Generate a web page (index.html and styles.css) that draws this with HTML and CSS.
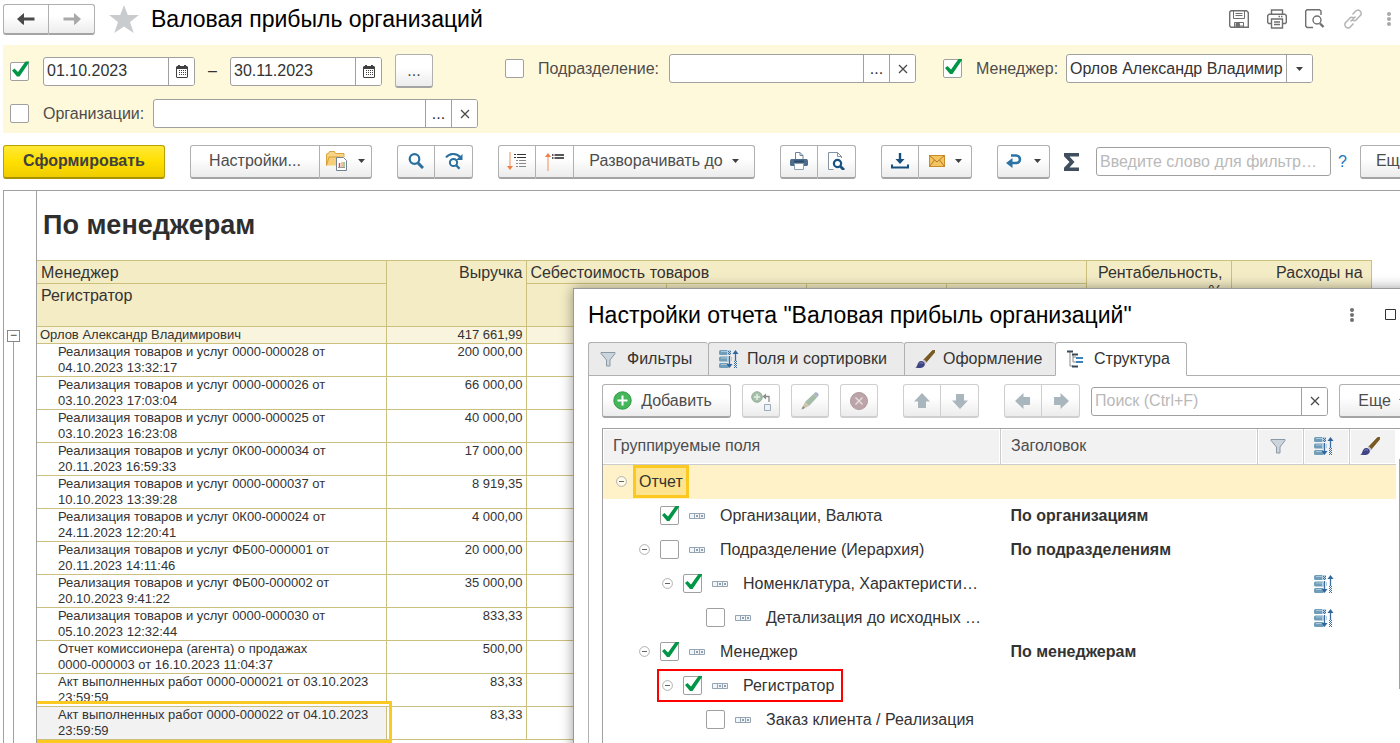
FILE: index.html
```html
<!DOCTYPE html>
<html lang="ru">
<head>
<meta charset="utf-8">
<title>Валовая прибыль организаций</title>
<link rel="stylesheet" href="styles.css">
</head>
<body>
<svg class="sprite" aria-hidden="true">
  <symbol id="i-cal" viewBox="0 0 12 13"><path fill="#404040" fill-rule="evenodd" d="M1 1h1V0h2v1h4V0h2v1h1l1 1v10l-1 1H1l-1-1V2zM1 4v8h10V4z"/><path fill="#404040" d="M5 5h1v1H5zM7 5h1v1H7zM9 5h1v1H9zM3 7h1v1H3zM5 7h1v1H5zM7 7h1v1H7zM9 7h1v1H9zM3 9h1v1H3zM5 9h1v1H5zM7 9h1v1H7zM3 5h1v1H3zM9 9h1v1H9z"/></symbol>
  <symbol id="i-x" viewBox="0 0 10 10"><path d="M1 1l8 8M9 1l-8 8" stroke="#4a4a4a" stroke-width="1.3"/></symbol>
  <symbol id="i-down" viewBox="0 0 7 4"><path d="M0 0h7L3.500 4z" fill="#404040"/></symbol>
  <symbol id="i-funnel" viewBox="0 0 16 16"><path d="M1 1.500h14v1l-5 6.500V15H6.500V9L1 2.500z" fill="#ccd5dc" stroke="#8b98a5"/></symbol>
  <symbol id="i-sort" viewBox="0 0 20 18"><g fill="#6f9dba"><rect width="10" height="5" rx="1.500"/><rect y="6.500" width="10" height="5" rx="1.500"/><rect y="13" width="10" height="5" rx="1.500"/></g><path d="M2 1.500h7M2 8h7M2 14.500h7" stroke="#a9c7d9"/><path d="M8 0h4v5H8zM8 7h2v4H8zM12 7h1v4h-1z" fill="#b6cede"/><path d="M9 1h1v1H9zM11 1h1v1h-1zM10 2h1v1h-1zM9 3h1v1H9zM11 3h1v1h-1zM10 4h1v1h-1zM15 11h1v1h-1zM17 11h1v1h-1zM16 12h1v1h-1zM15 13h1v1h-1zM17 13h1v1h-1zM16 14h1v1h-1zM15 15h1v1h-1zM17 15h1v1h-1zM16 16h1v1h-1zM15 17h1v1h-1zM17 17h1v1h-1z" fill="#3d6f9e"/><path d="M10.500 6v10M16.500 3v8" stroke="#3a6ea5" stroke-width="1.300"/><path d="M7.500 14h6l-3 4zM13.500 4l3-4 3 4z" fill="#2f669c"/></symbol>
  <symbol id="i-brush" viewBox="0 0 20 18"><path d="M8.500 10L17.500.5 20 0l-.5 2.500L11 12.500z" fill="#7a5a1e" stroke="#5c4213" stroke-width=".6"/><path d="M7.500 10.500l1.500-1 2.500 2.500-1 2z" fill="#c3c7cf"/><path d="M0 17.500c2.500-.5 2-3 3.500-5 1.500-1.800 4-2 5.500-.3s1 4.300-1.500 5.300-5 .5-7.500 0z" fill="#3f4484"/><path d="M4.500 13.500c1-1 2.500-1 3.500 0" stroke="#8488bd" fill="none"/></symbol>
  <symbol id="i-field" viewBox="0 0 16 6"><path d="M.5.5h15v5H.5zM5.500.5v5M10.500.5v5" fill="#f2f5f7" stroke="#95a5b3"/><path d="M7 2h2v2H7zM12 2h2v2h-2z" fill="#8da0af"/></symbol>
  <symbol id="i-minus" viewBox="0 0 11 11"><circle cx="5.500" cy="5.500" r="4.900" fill="#fff" fill-opacity=".6" stroke="#b0b0b0"/><path d="M3 5.500h5" stroke="#666"/></symbol>
  <symbol id="i-arrow" viewBox="0 0 18 16"><path d="M9 0l8 8.500h-4V15H5V8.500H1z" fill="#aab6be"/></symbol>
</svg>

<main class="app">
  <header class="titlebar">
    <div class="group">
      <button class="btn btn--nav" aria-label="Назад"><svg width="18" height="12" viewBox="0 0 18 12"><path d="M0 6l7-6v4.500h10.500v3H7V12l-2-1.200z" fill="#4a4a4a"/></svg></button>
      <button class="btn btn--nav" aria-label="Вперед"><svg width="18" height="12" viewBox="0 0 18 12"><path d="M18 6l-7-6v4.500H.5v3H11V12l2-1.200z" fill="#a9a9a9"/></svg></button>
    </div>
    <svg class="star" width="30" height="28" viewBox="0 0 30 28"><path d="M15 0l3.800 10H30l-9 7 3.700 11L15 21.500 5.300 28 9 17l-9-7h11.200z" fill="#c9ccce"/></svg>
    <h1 class="heading">Валовая прибыль организаций</h1>
    <div class="title-tools">
      <svg width="20" height="18" viewBox="0 0 20 18" fill="none" stroke="#6f6f6f"><path d="M2 .7h15.500l1.800 1.800V17.300H2L.7 16V2z" stroke-width="1.400"/><path d="M4.500 1v7.500h11V1M6.500 3.500h7M6.500 5.500h7"/><path d="M5.500 17v-4.500h9V17"/><path d="M7 13.500h3.500V17H7zM10.500 16h4" fill="#6f6f6f"/></svg>
      <svg width="20" height="20" viewBox="0 0 20 20" fill="none" stroke="#6f6f6f" stroke-width="1.400"><path d="M4.500 5V1h11v4M4.500 14.500H1.700L.7 13.500V6.500l1.500-1.300h15.600l1.500 1.300v7l-1 1h-2.800"/><path d="M4.500 10h11v9h-11z"/><path d="M7 13h6M7 15.500h6M11.500 7.500h1.500M14 7.500h1.500"/></svg>
      <svg width="20" height="20" viewBox="0 0 20 20" fill="none" stroke="#6f6f6f" stroke-width="1.400"><path d="M8 18.500H2L.7 17V2L2 .7h12.500L16 2v4"/><circle cx="12" cy="11" r="4"/><path d="M15 14.500l3.500 3.500" stroke-width="2.400"/></svg>
      <svg width="20" height="20" viewBox="0 0 20 20" fill="none" stroke="#b4b4b4" stroke-width="1.500"><path d="M9.500 5.500l3-3.200c1.300-1.400 3.300-1.500 4.600-.3s1.500 3.300.2 4.600l-3.800 4c-1.200 1.200-2.800 1.300-4.100.5M10.500 14.500l-3 3.200c-1.300 1.400-3.300 1.500-4.600.3s-1.500-3.300-.2-4.600l3.800-4c1.200-1.200 2.800-1.300 4.100-.5M7.500 12.500l5-5"/></svg>
      <svg width="4" height="14" viewBox="0 0 4 14" fill="#a8a8a8"><circle cx="2" cy="2" r="2"/><circle cx="2" cy="7" r="2"/><circle cx="2" cy="12" r="2"/></svg>
    </div>
  </header>

  <section class="filters">
    <div class="filter-main">
      <div class="filter-row filter-row--tall">
        <input class="check" type="checkbox" checked aria-label="Период">
        <div class="field field--date"><input type="text" value="01.10.2023" aria-label="Начало периода"><button aria-label="Календарь"><svg width="12" height="13"><use href="#i-cal"/></svg></button></div>
        <span class="dash">–</span>
        <div class="field field--date"><input type="text" value="30.11.2023" aria-label="Конец периода"><button aria-label="Календарь"><svg width="12" height="13"><use href="#i-cal"/></svg></button></div>
        <button class="btn btn--dots">...</button>
      </div>
      <div class="filter-row">
        <input class="check" type="checkbox" id="c-org"><label class="lbl lbl--org" for="c-org">Организации:</label>
        <div class="field field--org"><input type="text" aria-label="Организации"><button class="dots">...</button><button aria-label="Очистить"><svg width="10" height="10"><use href="#i-x"/></svg></button></div>
      </div>
    </div>
    <div class="filter-row filter-row--side">
      <input class="check" type="checkbox" id="c-dep"><label class="lbl lbl--dep" for="c-dep">Подразделение:</label>
      <div class="field field--ref"><input type="text" aria-label="Подразделение"><button class="dots">...</button><button aria-label="Очистить"><svg width="10" height="10"><use href="#i-x"/></svg></button></div>
    </div>
    <div class="filter-row filter-row--side">
      <input class="check" type="checkbox" id="c-man" checked><label class="lbl lbl--man" for="c-man">Менеджер:</label>
      <div class="field field--ref"><input type="text" value="Орлов Александр Владимирович" aria-label="Менеджер"><button aria-label="Выбрать"><svg width="7" height="4"><use href="#i-down"/></svg></button></div>
    </div>
  </section>

  <div class="toolbar">
    <button class="btn btn--primary">Сформировать</button>
    <div class="group">
      <button class="btn btn--settings">Настройки...</button>
      <button class="btn btn--menu btn--variants" aria-label="Варианты отчета"><svg width="22" height="20" viewBox="0 0 22 20"><path d="M.5 14.500V3l2-.5 1-2h5l1 2H18V6" fill="#f8d486" stroke="#d9a23c"/><path d="M1 5h17v9.500H1z" fill="#f6cf78"/><path d="M.5 14.500L3 6h11" fill="none" stroke="#d9a23c"/><path d="M10.500 6.500h7l3 3v10h-10z" fill="#fff" stroke="#718391"/><path d="M13.500 16v-4" stroke="#e04a3c" stroke-width="1.500"/><path d="M16 16v-5" stroke="#d98c2a"/><path d="M18 16v-5" stroke="#4aa14a"/><path d="M12 16.500h7" stroke="#999"/></svg><svg width="7" height="4"><use href="#i-down"/></svg></button>
    </div>
    <div class="group">
      <button class="btn btn--ico" aria-label="Найти"><svg width="16" height="16" viewBox="0 0 16 16"><circle cx="6.500" cy="6" r="4.800" fill="none" stroke="#2a6f9e" stroke-width="2.200"/><path d="M10 10l5 5" stroke="#2a6f9e" stroke-width="3"/></svg></button>
      <button class="btn btn--ico" aria-label="Найти следующий"><svg width="18" height="17" viewBox="0 0 18 17" fill="none" stroke="#2a6f9e"><path d="M1 4.500C4 .5 11-.5 15 4" stroke-width="2"/><path d="M17.500 1v6H11z" fill="#2a6f9e" stroke="none"/><circle cx="8.500" cy="9.500" r="3.600" stroke-width="2"/><path d="M11 12l3.500 3.800" stroke-width="2.400"/></svg></button>
    </div>
    <div class="group">
      <button class="btn btn--ico" aria-label="Развернуть"><svg width="20" height="19" viewBox="0 0 20 19"><path d="M3 0v15" stroke="#f58d57"/><path d="M0 14h6l-3 4z" fill="#f47c40"/><path d="M7 2.500h2M10 2.500h9M7 5.500h2M10 5.500h9" stroke="#333"/><path d="M9 8.500h2M12 8.500h7M9 11.500h2M12 11.500h7M9 14.500h2M12 14.500h7" stroke="#888"/></svg></button>
      <button class="btn btn--ico" aria-label="Свернуть"><svg width="20" height="19" viewBox="0 0 20 19"><path d="M3 3v16" stroke="#f58d57"/><path d="M0 5h6L3 1z" fill="#f47c40"/><path d="M7 3h1.500M9.500 3H19M7 6h1.500M9.500 6H19" stroke="#222" stroke-width="1.300"/></svg></button>
      <button class="btn btn--expand">Разворачивать до <svg width="7" height="4"><use href="#i-down"/></svg></button>
    </div>
    <div class="group">
      <button class="btn btn--ico" aria-label="Печать"><svg width="18" height="18" viewBox="0 0 18 18"><path d="M5.500 8V.5H10l3 3V8z" fill="#fff" stroke="#71859a"/><path d="M10 .5v3h3" fill="none" stroke="#71859a"/><path d="M1 7h16l1 1.500V13l-1 1H1l-1-1V8.500z" fill="#4e6d8d"/><path d="M4 8.500h10v2H4z" fill="#294a6a"/><path d="M4.500 11.500h9v6h-9z" fill="#fff" stroke="#8aa0b4"/></svg></button>
      <button class="btn btn--ico" aria-label="Предпросмотр"><svg width="18" height="18" viewBox="0 0 18 18"><path d="M5.500 17.500H.5V.5h9l4 4V6M9.500.5v4h4" fill="#fff" stroke="#8293a3"/><circle cx="9.500" cy="11.500" r="3.600" fill="#fff" stroke="#175280" stroke-width="2.200"/><path d="M12 14l4 4" stroke="#175280" stroke-width="2.800"/></svg></button>
    </div>
    <div class="group">
      <button class="btn btn--ico" aria-label="Сохранить"><svg width="18" height="16" viewBox="0 0 18 16"><path d="M9 0v8" stroke="#164e7c" stroke-width="2.400"/><path d="M4.500 6h9L9 11z" fill="#164e7c"/><path d="M1 11.500v3h16v-3" fill="none" stroke="#164e7c" stroke-width="2"/></svg></button>
      <button class="btn btn--menu" aria-label="Отправить"><svg width="16" height="12" viewBox="0 0 16 12"><path d="M.5.5h15v11H.5z" fill="#f4c461" stroke="#c98b28"/><path d="M.5.5L8 7l7.500-6.500M.5 11.500L5.500 5M15.500 11.500L10.500 5" fill="none" stroke="#b57a20"/></svg><svg width="7" height="4"><use href="#i-down"/></svg></button>
    </div>
    <button class="btn btn--back" aria-label="История"><svg width="16" height="14" viewBox="0 0 16 14"><path d="M5 1.500h5c5 0 5.500 7.500 0 7.500H6" fill="none" stroke="#2d74a4" stroke-width="2.600"/><path d="M0 9l6.500-5v10z" fill="#2d74a4"/></svg><svg width="7" height="4"><use href="#i-down"/></svg></button>
    <svg class="sigma" width="16" height="18" viewBox="0 0 16 18"><path d="M0 0h15v3.500H5.500L10.500 9l-5 5.500H15V18H0v-3.200L5.500 9 0 3.200z" fill="#3f4f5e"/></svg>
    <div class="field field--search"><input type="text" placeholder="Введите слово для фильтр…" aria-label="Фильтр"></div>
    <a class="help" href="#">?</a>
    <button class="btn btn--more">Еще</button>
  </div>

  <section class="report">
    <div class="gutter"><span class="fold">−</span><span class="fold-line"></span></div>
    <div class="sheet">
      <h2 class="sheet-title">По менеджерам</h2>
      <table class="rt">
        <colgroup><col class="w-first"><col class="w140"><col class="w140"><col class="w140"><col class="w140"><col class="w140"><col class="w145"><col class="w140"></colgroup>
        <thead>
          <tr class="h1r"><th>Менеджер</th><th class="num" rowspan="2">Выручка</th><th colspan="4">Себестоимость товаров</th><th class="num num--wide" rowspan="2">Рентабельность, %</th><th class="num num--wide" rowspan="2">Расходы на</th></tr>
          <tr class="h2r"><th>Регистратор</th><th></th><th></th><th></th><th></th></tr>
        </thead>
        <tbody>
          <tr class="sum"><td>Орлов Александр Владимирович</td><td class="num">417 661,99</td><td></td><td></td><td></td><td></td><td></td><td></td></tr>
          <tr><td>Реализация товаров и услуг 0000-000028 от<br>04.10.2023 13:32:17</td><td class="num">200 000,00</td><td></td><td></td><td></td><td></td><td></td><td></td></tr>
          <tr><td>Реализация товаров и услуг 0000-000026 от<br>03.10.2023 17:03:04</td><td class="num">66 000,00</td><td></td><td></td><td></td><td></td><td></td><td></td></tr>
          <tr><td>Реализация товаров и услуг 0000-000025 от<br>03.10.2023 16:23:08</td><td class="num">40 000,00</td><td></td><td></td><td></td><td></td><td></td><td></td></tr>
          <tr><td>Реализация товаров и услуг 0К00-000034 от<br>20.11.2023 16:59:33</td><td class="num">17 000,00</td><td></td><td></td><td></td><td></td><td></td><td></td></tr>
          <tr><td>Реализация товаров и услуг 0000-000037 от<br>10.10.2023 13:39:28</td><td class="num">8 919,35</td><td></td><td></td><td></td><td></td><td></td><td></td></tr>
          <tr><td>Реализация товаров и услуг 0К00-000024 от<br>24.11.2023 12:20:41</td><td class="num">4 000,00</td><td></td><td></td><td></td><td></td><td></td><td></td></tr>
          <tr><td>Реализация товаров и услуг ФБ00-000001 от<br>20.11.2023 14:11:46</td><td class="num">20 000,00</td><td></td><td></td><td></td><td></td><td></td><td></td></tr>
          <tr><td>Реализация товаров и услуг ФБ00-000002 от<br>20.10.2023 9:41:22</td><td class="num">35 000,00</td><td></td><td></td><td></td><td></td><td></td><td></td></tr>
          <tr><td>Реализация товаров и услуг 0000-000030 от<br>05.10.2023 12:32:44</td><td class="num">833,33</td><td></td><td></td><td></td><td></td><td></td><td></td></tr>
          <tr><td>Отчет комиссионера (агента) о продажах<br>0000-000003 от 16.10.2023 11:04:37</td><td class="num">500,00</td><td></td><td></td><td></td><td></td><td></td><td></td></tr>
          <tr><td>Акт выполненных работ 0000-000021 от 03.10.2023<br>23:59:59</td><td class="num">83,33</td><td></td><td></td><td></td><td></td><td></td><td></td></tr>
          <tr><td class="current">Акт выполненных работ 0000-000022 от 04.10.2023<br>23:59:59</td><td class="num">83,33</td><td></td><td></td><td></td><td></td><td></td><td></td></tr>
        </tbody>
      </table>
    </div>
  </section>
</main>

<section class="dialog" role="dialog" aria-labelledby="dlg-title">
  <header class="dialog-head">
    <h2 class="heading" id="dlg-title">Настройки отчета "Валовая прибыль организаций"</h2>
    <svg class="dlg-dots" width="4" height="14" viewBox="0 0 4 14" fill="#707070"><circle cx="2" cy="2" r="2"/><circle cx="2" cy="7" r="2"/><circle cx="2" cy="12" r="2"/></svg>
    <svg width="11" height="11" viewBox="0 0 11 11"><path d="M.5.5h10v10H.5z" fill="none" stroke="#333"/></svg>
  </header>
  <nav class="tabs">
    <button class="tab tab--filters"><svg width="16" height="16"><use href="#i-funnel"/></svg>Фильтры</button>
    <button class="tab tab--fields"><svg width="20" height="18"><use href="#i-sort"/></svg>Поля и сортировки</button>
    <button class="tab tab--design"><svg width="20" height="18"><use href="#i-brush"/></svg>Оформление</button>
    <button class="tab tab--struct tab--on"><svg width="17" height="18" viewBox="0 0 17 18"><path d="M3 2v14h3M6 4v8h3M6 7h3" fill="none" stroke="#8a8a8a"/><path d="M0 1.500h6M5 4.500h6M5 16.500h6" stroke="#3a4a58" stroke-width="2"/><path d="M9 8h7M9 12h7" stroke="#3b82b8" stroke-width="2"/></svg>Структура</button>
    <span class="tabs-rest"></span>
  </nav>
  <div class="dialog-body">
    <div class="dlg-bar">
      <button class="btn btn--add"><svg width="19" height="19" viewBox="0 0 19 19"><circle cx="9.500" cy="9.500" r="8.700" fill="#45b75a" stroke="#2b9a44"/><path d="M9.500 4.500v10M4.500 9.500h10" stroke="#fff" stroke-width="2"/></svg>Добавить</button>
      <button class="btn btn--sq off" aria-label="Сгруппировать"><svg width="20" height="20" viewBox="0 0 20 20"><circle cx="6" cy="6" r="5.300" fill="#a5bfa9" stroke="#93ae98"/><path d="M6 3v6M3 6h6" stroke="#e6efe7" stroke-width="1.500"/><path d="M18 11V5.500h-4" fill="none" stroke="#8b8b8b" stroke-width="1.300"/><path d="M11.500 5.500L15 2.500v6z" fill="#8b8b8b"/><path d="M13.500 13.500h6v6h-6z" fill="#eef1f4" stroke="#9daabb"/></svg></button>
      <button class="btn btn--sq off" aria-label="Изменить"><svg width="18" height="18" viewBox="0 0 18 18"><path d="M4 10l8.500-8 3.500 3.500L8 14z" fill="#a6bca8"/><path d="M12.500 2L14 .5c2-.7 4 1.300 3.500 3L16 5.500z" fill="#aab4c6"/><path d="M4 10l4 4-7.500 3.500z" fill="#cfc3ac"/><path d="M.5 17.500L2 14l2 2z" fill="#888"/></svg></button>
      <button class="btn btn--sq off" aria-label="Удалить"><svg width="18" height="18" viewBox="0 0 18 18"><circle cx="9" cy="9" r="8.500" fill="#bba5a8" stroke="#b0999c"/><path d="M5.500 5.500l7 7M12.500 5.500l-7 7" stroke="#eadfe0" stroke-width="1.400"/></svg></button>
      <div class="group off group--ud">
        <button class="btn btn--ico" aria-label="Вверх"><svg width="18" height="16"><use href="#i-arrow"/></svg></button>
        <button class="btn btn--ico" aria-label="Вниз"><svg class="r180" width="18" height="16"><use href="#i-arrow"/></svg></button>
      </div>
      <div class="group off group--lr">
        <button class="btn btn--ico" aria-label="Влево"><svg class="r270" width="18" height="16"><use href="#i-arrow"/></svg></button>
        <button class="btn btn--ico" aria-label="Вправо"><svg class="r90" width="18" height="16"><use href="#i-arrow"/></svg></button>
      </div>
      <div class="field field--find"><input type="text" placeholder="Поиск (Ctrl+F)" aria-label="Поиск"><button aria-label="Очистить"><svg width="10" height="10"><use href="#i-x"/></svg></button></div>
      <button class="btn btn--more btn--more-dlg">Еще<svg width="7" height="4"><use href="#i-down"/></svg></button>
    </div>
    <div class="grid-wrap">
      <table class="grid">
        <colgroup><col class="g-name"><col class="g-title"><col class="g-ico"><col class="g-ico"><col class="g-ico"></colgroup>
        <thead><tr><th>Группируемые поля</th><th>Заголовок</th><th class="ic"><svg width="16" height="16"><use href="#i-funnel"/></svg></th><th class="ic"><svg width="20" height="18"><use href="#i-sort"/></svg></th><th class="ic"><svg width="20" height="18"><use href="#i-brush"/></svg></th></tr></thead>
        <tbody>
          <tr class="sel"><td><div class="node"><svg width="11" height="11"><use href="#i-minus"/></svg><span class="cell-on">Отчет</span></div></td><td></td><td></td><td></td><td></td></tr>
          <tr><td><div class="node l1"><span class="gap"></span><input class="check" type="checkbox" id="n1" checked><svg width="16" height="6"><use href="#i-field"/></svg><label for="n1">Организации, Валюта</label></div></td><td class="b">По организациям</td><td></td><td></td><td></td></tr>
          <tr><td><div class="node l1"><svg width="11" height="11"><use href="#i-minus"/></svg><input class="check" type="checkbox" id="n2"><svg width="16" height="6"><use href="#i-field"/></svg><label for="n2">Подразделение (Иерархия)</label></div></td><td class="b">По подразделениям</td><td></td><td></td><td></td></tr>
          <tr><td><div class="node l2"><svg width="11" height="11"><use href="#i-minus"/></svg><input class="check" type="checkbox" id="n3" checked><svg width="16" height="6"><use href="#i-field"/></svg><label for="n3">Номенклатура, Характеристи…</label></div></td><td></td><td></td><td class="ic"><svg width="20" height="18"><use href="#i-sort"/></svg></td><td></td></tr>
          <tr><td><div class="node l3"><span class="gap"></span><input class="check" type="checkbox" id="n4"><svg width="16" height="6"><use href="#i-field"/></svg><label for="n4">Детализация до исходных …</label></div></td><td></td><td></td><td class="ic"><svg width="20" height="18"><use href="#i-sort"/></svg></td><td></td></tr>
          <tr><td><div class="node l1"><svg width="11" height="11"><use href="#i-minus"/></svg><input class="check" type="checkbox" id="n5" checked><svg width="16" height="6"><use href="#i-field"/></svg><label for="n5">Менеджер</label></div></td><td class="b">По менеджерам</td><td></td><td></td><td></td></tr>
          <tr><td><div class="node l2"><div class="marked"><svg width="11" height="11"><use href="#i-minus"/></svg><input class="check" type="checkbox" id="n6" checked><svg width="16" height="6"><use href="#i-field"/></svg><label for="n6">Регистратор</label></div></div></td><td></td><td></td><td></td><td></td></tr>
          <tr><td><div class="node l3"><span class="gap"></span><input class="check" type="checkbox" id="n7"><svg width="16" height="6"><use href="#i-field"/></svg><label for="n7">Заказ клиента / Реализация</label></div></td><td></td><td></td><td></td><td></td></tr>
        </tbody>
      </table>
      <div class="scroll"><span class="thumb"></span></div>
    </div>
  </div>
</section>
</body>
</html>
```
FILE: styles.css
```css
* { box-sizing: border-box; }
html, body { height: 100%; }
body { margin: 0; overflow: hidden; position: relative; background: #fff; color: #333; font: 16px/20px "Liberation Sans", Arial, sans-serif; }
.sprite { position: absolute; width: 0; height: 0; }
svg { flex: none; display: block; }
button, input { font: inherit; color: inherit; margin: 0; }
.app { display: flex; flex-direction: column; height: 100%; padding-left: 3px; }

/* Buttons */
.btn { display: inline-flex; align-items: center; justify-content: center; flex: none; height: 34px; padding: 0; border: 1px solid #b0b0b0; border-bottom: 2px solid #a4a4a4; border-radius: 3px; background: linear-gradient(#fff 40%, #ececec); color: #4d4d4d; white-space: nowrap; }
.group { display: flex; flex: none; }
.group .btn + .btn { border-left: 0; border-top-left-radius: 0; border-bottom-left-radius: 0; }
.group .btn:not(:last-child) { border-top-right-radius: 0; border-bottom-right-radius: 0; }
.btn--ico { width: 38px; }
.btn--menu { width: 53px; gap: 10px; }
.btn--variants { width: 52px; }
.btn--dots { width: 38px; }
.off .btn, .btn.off { border-color: #cfcfcf; }

/* Title bar */
.titlebar { display: flex; align-items: center; height: 45px; flex: none; padding-bottom: 7px; }
.btn--nav { width: 46px; height: 31px; }
.star { margin: 0 12px 0 14px; }
.heading { margin: 0; font-size: 23px; line-height: 28px; font-weight: 400; color: #000; white-space: nowrap; }
.title-tools { display: flex; align-items: center; gap: 18px; margin-left: auto; padding-right: 9px; }
.title-tools svg:last-child { margin-left: 6px; }

/* Filters */
.filters { display: flex; align-items: flex-start; flex: none; height: 88px; padding: 9px 0 0 7px; background: #fff9db; }
.filter-main { display: flex; flex-direction: column; gap: 11px; width: 468px; flex: none; }
.filter-row { display: flex; align-items: center; height: 29px; flex: none; }
.filter-row--tall { height: 34px; }
.filter-row--side { margin-left: 27px; }
.lbl { color: #4d4d4d; white-space: nowrap; flex: none; }
.lbl--org { width: 110px; }
.lbl--dep { width: 131px; }
.lbl--man { width: 90px; }
.filters .check { margin-right: 14px; }
.dash { flex: none; width: 35px; text-align: center; }
.filter-row .btn--dots { margin-left: 13px; }
.check { appearance: none; flex: none; position: relative; width: 19px; height: 19px; margin: 0; border: 1px solid #a0a0a0; border-radius: 2px; background: #fff; }
.check:checked::before { content: ""; position: absolute; inset: -2px; width: 20px; height: 20px; background: #009646; clip-path: path("M3 10L5.500 8 9 11.500 16.500 1 20 1 20 2 10.500 16 8 16z"); }
.field { display: flex; flex: none; height: 29px; border: 1px solid #a0a0a0; border-radius: 3px; background: #fff; overflow: hidden; }
.field input { flex: 1; min-width: 0; border: 0; outline: 0; padding: 0 3px; background: transparent; }
.field input::placeholder { color: #b9b9b9; opacity: 1; }
.field button { display: flex; align-items: center; justify-content: center; width: 26px; flex: none; padding: 0; border: 0; border-left: 1px solid #a0a0a0; background: #fff; }
.field--date { width: 152px; }
.field--org { width: 325px; }
.field--ref { width: 247px; }
.field--search { width: 235px; }
.field--find { width: 237px; }

/* Toolbar */
.toolbar { display: flex; align-items: center; flex: none; gap: 25px; height: 57px; overflow: hidden; }
.btn--primary { width: 162px; border-color: #b8a000; border-bottom-color: #a89200; background: linear-gradient(#ffe838, #ffe000 50%, #efcc00); color: #404040; font-weight: 700; }
.btn--settings { width: 130px; }
.btn--expand { width: 181px; gap: 9px; }
.btn--back { width: 53px; gap: 12px; }
.sigma { margin-left: -11px; }
.field--search { margin-left: -9px; }
.help { margin: 0 -12px 0 -18px; width: 10px; color: #1b75bb; text-decoration: none; }
.btn--more { width: 80px; }
.toolbar .btn--more { justify-content: flex-start; padding-left: 15px; }

/* Report */
.report { display: flex; flex: 1; min-height: 0; overflow: hidden; border-top: 1px solid #a0a0a0; border-left: 1px solid #a0a0a0; }
.gutter { display: flex; flex-direction: column; align-items: center; width: 32px; flex: none; padding: 139px 16px 0 3px; }
.fold { flex: none; width: 13px; height: 12px; border: 1px solid #888; font-size: 12px; line-height: 9px; text-align: center; }
.fold-line { flex: 1; width: 1px; background: #a0a0a0; }
.sheet { flex: 1; min-width: 0; overflow: hidden; border-left: 1px solid #a0a0a0; }
.sheet-title { margin: 0; padding: 18px 6px 19px; font-size: 27px; line-height: 32px; color: #2e2e2e; white-space: nowrap; }
.rt { width: 1334px; border-collapse: collapse; table-layout: fixed; font-size: 13px; line-height: 16px; }
.w-first { width: 349px; }
.w140 { width: 140px; }
.w145 { width: 145px; }
.rt th, .rt td { border: 1px solid #ccc07e; padding: 0 4px; vertical-align: top; text-align: left; }
.rt tr > :first-child { border-left: 0; }
.rt th { background: #f4ecc5; font-size: 16px; line-height: 19px; font-weight: 400; padding-top: 2px; }
.h1r { height: 23px; }
.h2r { height: 43px; }
.rt .num { text-align: right; padding-right: 3px; }
.rt .num--wide { padding-right: 8px; }
.sum { height: 17px; background: #f9f4dd; }
.rt tbody td:first-child { padding-left: 21px; white-space: nowrap; }
.rt tbody .sum td:first-child { padding-left: 3px; }
.rt tbody tr:not(.sum) { height: 33px; }
.rt .current { position: relative; background: #f2f2f2 padding-box; }
.current::after { content: ""; position: absolute; inset: -6px -6px -4px 0; border: 3px solid #fbc91f; border-left: 0; box-shadow: inset 0 2px #fff; }

/* Dialog window over the report */
.dialog { position: absolute; left: 573px; top: 288px; right: -24px; bottom: -24px; display: flex; flex-direction: column; padding-left: 14px; border: 1px solid #999; background: #fff; box-shadow: 0 0 12px rgba(0, 0, 0, .4); overflow: hidden; }
.dialog-head { display: flex; align-items: center; height: 53px; flex: none; padding: 0 27px 2px 0; }
.dlg-dots { margin: 0 31px 0 auto; }
.tabs { display: flex; flex: none; height: 34px; }
.tab { display: flex; align-items: center; gap: 9px; flex: none; padding: 0 0 0 11px; border: 1px solid #b0b0b0; border-right: 0; border-radius: 3px 3px 0 0; background: #ebebeb; white-space: nowrap; }
.tab--filters { width: 120px; gap: 11px; }
.tab--fields { width: 196px; padding-left: 10px; gap: 8px; }
.tab--design { width: 151px; padding-left: 10px; gap: 8px; }
.tab--struct { width: 132px; gap: 10px; }
.tab--on { border-right: 1px solid #b0b0b0; border-bottom-color: #fff; background: #fff; }
.tabs-rest { flex: 1; border-bottom: 1px solid #b0b0b0; }
.dialog-body { flex: 1; display: flex; flex-direction: column; min-height: 0; padding: 8px 0 0 13px; border-left: 1px solid #b0b0b0; }
.dlg-bar { display: flex; align-items: center; flex: none; }
.btn--add { width: 129px; gap: 9px; margin-right: 11px; padding-right: 8px; }
.btn--sq { width: 38px; margin-right: 11px; }
.group--ud { margin: 0 25px 0 14px; }
.group--lr { margin: 0 11px 0 0; }
.btn--more-dlg { margin-left: 11px; gap: 8px; padding-left: 6px; }
.r180 { transform: rotate(180deg); }
.r270 { transform: rotate(-90deg); }
.r90 { transform: rotate(90deg); }
.grid-wrap { display: flex; flex: 1; margin-top: 10px; border: 1px solid #a0a0a0; border-right: 0; }
.grid { width: 793px; flex: none; align-self: flex-start; border-collapse: collapse; table-layout: fixed; }
.g-name { width: 397px; }
.g-title { width: 257px; }
.g-ico { width: 46px; }
.grid th { height: 35px; padding: 0 10px; border-bottom: 1px solid #ccc; border-right: 1px solid #ccc; background: #f2f2f2; box-shadow: inset 0 0 0 1px #fff; font-weight: 400; text-align: left; color: #4d4d4d; }
.grid th:last-child { border-right: 0; }
.grid td { height: 34px; padding: 0 10px; white-space: nowrap; }
.grid td:first-child { padding: 0; }
.grid .ic { padding: 0 6px 0 0; }
.ic svg { margin: 0 auto; }
.b { font-weight: 700; }
.sel { background: #fff2c8; }
.node { display: flex; align-items: center; gap: 10px; padding-left: 13px; height: 34px; }
.node label { padding-left: 5px; }
.l1 { padding-left: 36px; }
.l2 { padding-left: 59px; }
.l3 { padding-left: 82px; }
.gap { width: 11px; }
.cell-on { height: 33px; margin-left: -4px; padding: 4px 3px 0; border: 3px solid #fbc91f; background: #ffe48f; }
.marked { display: flex; align-items: center; gap: 10px; height: 23px; padding-right: 4px; outline: 2px solid #f00; outline-offset: 3px; }
.scroll { width: 8px; margin-left: 3px; padding-top: 30px; }
.thumb { display: block; width: 8px; height: 230px; background: #a0a0a0; }
```
